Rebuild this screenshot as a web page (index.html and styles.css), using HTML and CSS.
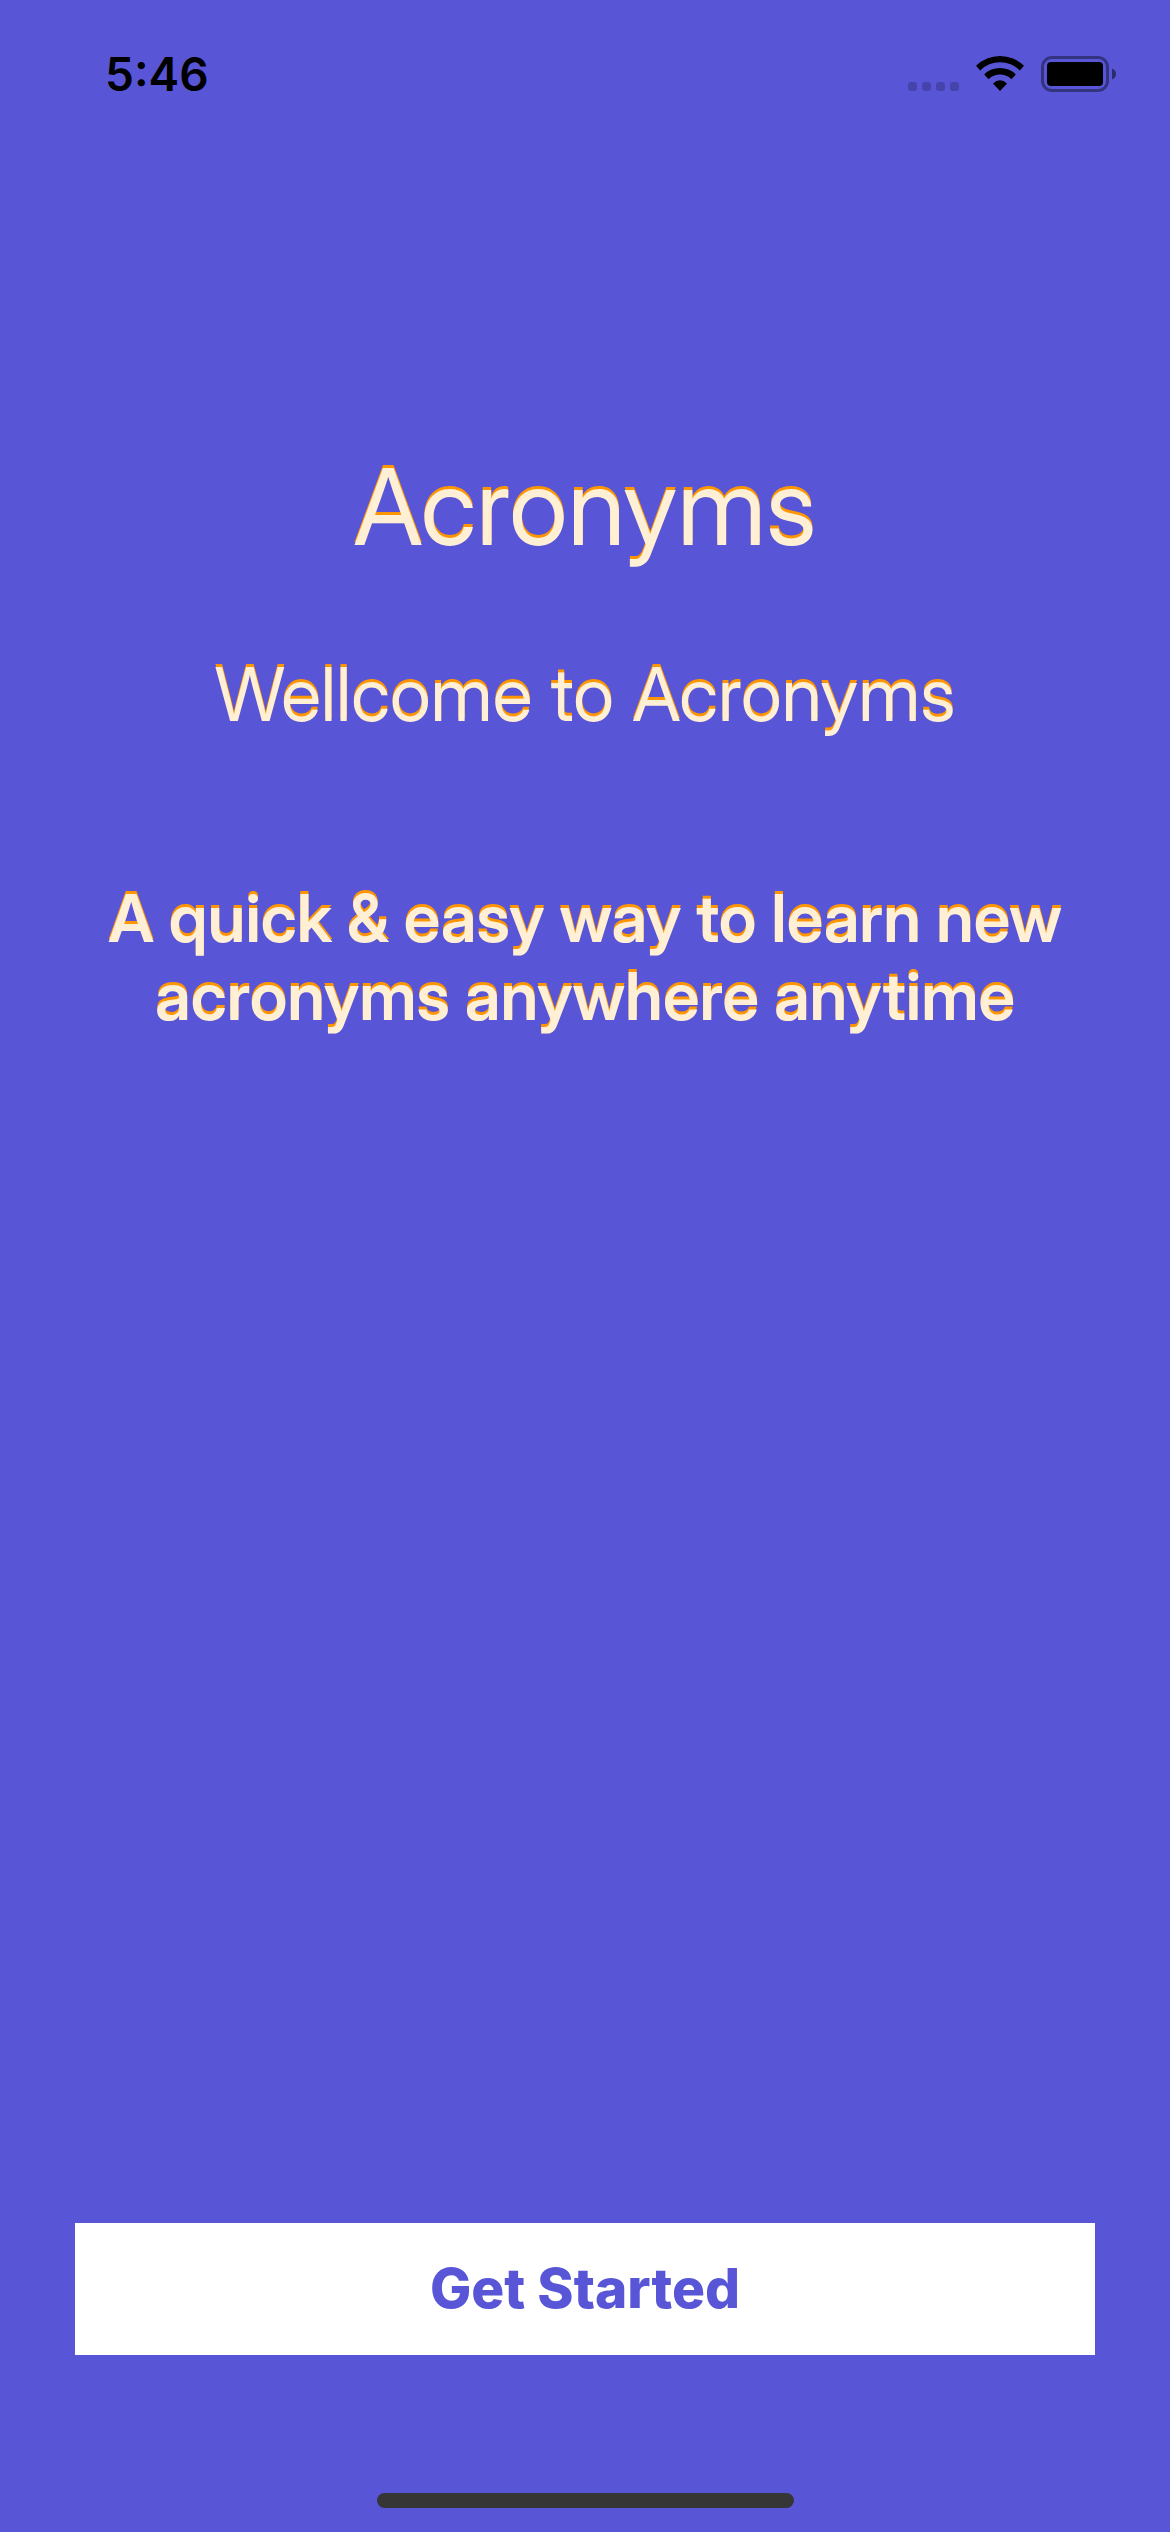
FILE: index.html
```html
<!DOCTYPE html>
<html lang="en">
<head>
<meta charset="utf-8">
<meta name="viewport" content="width=device-width, initial-scale=1">
<title>Acronyms</title>
<link rel="stylesheet" href="styles.css">
</head>
<body>
<div class="screen">
  <header class="status-bar">
    <time class="clock">5:46</time>
    <div class="indicators">
      <svg class="signal" viewBox="0 0 51 9" aria-hidden="true">
        <rect x="0" width="9" height="9" rx="3"/>
        <rect x="14" width="9" height="9" rx="3"/>
        <rect x="28" width="9" height="9" rx="3"/>
        <rect x="42" width="9" height="9" rx="3"/>
      </svg>
      <svg class="wifi" viewBox="0 0 48 36" aria-label="Wi-Fi">
        <path d="M0 10.8A34 34 0 0 1 48 10.8L43.8 15.4A28 28 0 0 0 4.2 15.4Z"/>
        <path d="M8.2 19.4A22.4 22.4 0 0 1 39.8 19.4L35.4 24.2A16.4 16.4 0 0 0 12.6 24.2Z"/>
        <path d="M17 28.4Q24 22.2 31 28.4L24 36Z"/>
      </svg>
      <svg class="battery" viewBox="0 0 75 36" aria-label="Battery full">
        <rect class="battery-case" x="1.5" y="1.5" width="65" height="33" rx="9.5"/>
        <rect x="6" y="6" width="56" height="24" rx="4"/>
        <path class="battery-tip" d="M71 12.5Q75 14 75 18Q75 22 71 23.5Z"/>
      </svg>
    </div>
  </header>
  <main class="welcome">
    <h1 class="title">Acronyms</h1>
    <h2 class="subtitle">Wellcome to Acronyms</h2>
    <p class="tagline">A quick &amp; easy way to learn new acronyms anywhere anytime</p>
    <button class="start" type="button">Get Started</button>
  </main>
  <div class="home-indicator"></div>
</div>
</body>
</html>
```
FILE: styles.css
```css
* {
  box-sizing: border-box;
  margin: 0;
}

body {
  background: #5856d6;
  font-family: Inter, "Liberation Sans", sans-serif;
}

.screen {
  display: flex;
  flex-direction: column;
  min-height: 100vh;
  padding-bottom: 24px;
}

.status-bar {
  display: flex;
  justify-content: space-between;
  padding: 46px 54px 0 105px;
  color: #000;
}

.clock {
  font-size: 46px;
  font-weight: 600;
  line-height: 56px;
}

.indicators {
  display: flex;
  align-items: flex-end;
  gap: 17px;
  height: 46px;
}

.signal {
  width: 51px;
  height: 9px;
  margin-bottom: 1px;
  opacity: 0.2;
}

.wifi {
  width: 48px;
  height: 36px;
  margin-bottom: 1px;
}

.battery {
  width: 75px;
  height: 36px;
}

.battery-case {
  fill: none;
  stroke: #000;
  stroke-width: 3;
  opacity: 0.4;
}

.battery-tip {
  opacity: 0.5;
}

.welcome {
  display: flex;
  flex: 1;
  flex-direction: column;
  padding: 341px 75px 138px;
  color: #ffefd5;
  text-align: center;
}

.title,
.subtitle,
.tagline {
  font-family: "Inter Display", Inter, "Liberation Sans", sans-serif;
  text-shadow: 0 -3px 0 #ff9500;
}

.title {
  margin-bottom: 79px;
  font-size: 106px;
  font-weight: 400;
  line-height: 128px;
}

.subtitle {
  margin-bottom: 141px;
  font-size: 74px;
  font-weight: 400;
  line-height: 88px;
}

.tagline {
  font-size: 66px;
  font-weight: 600;
  line-height: 78px;
}

.start {
  height: 132px;
  margin-top: auto;
  padding-bottom: 3px;
  border: 0;
  background: #fff;
  color: #5856d6;
  font-family: inherit;
  font-size: 55px;
  font-weight: 800;
}

.home-indicator {
  align-self: center;
  width: 417px;
  height: 15px;
  border-radius: 8px;
  background: #363636;
}
```
